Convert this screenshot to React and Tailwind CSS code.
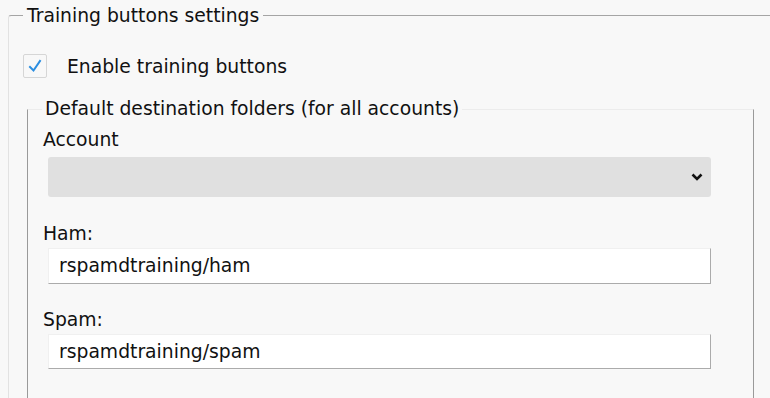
export default function App() {
  const font = { fontFamily: '"DejaVu Sans", sans-serif' };
  return (
    <div className="w-[770px] h-[398px] overflow-hidden bg-[#f8f8f8] text-[#111] text-[18.75px] leading-[22px]" style={font}>
      <fieldset className="ml-[8px] mt-[4px] w-[900px] border-t border-l border-t-[#a5a5a5] border-l-[#e2e2e2] rounded-tl-[3px] min-h-[500px]">
        <legend className="ml-[14px] px-[4px] pt-[1px]">Training buttons settings</legend>
        <div className="flex items-center mt-[27px] ml-[14px]">
          <div className="w-[24px] h-[24px] border border-[#d6d6d6] bg-[#f8f8f8] flex items-center justify-center rounded-[2px]">
            <svg width="16" height="16" viewBox="0 0 16 16">
              <path d="M3 9 L6.5 12.5 L13 3" fill="none" stroke="#2b8ee0" strokeWidth="2" strokeLinecap="square" strokeLinejoin="miter" />
            </svg>
          </div>
          <span className="ml-[20px] pt-[1px]">Enable training buttons</span>
        </div>
        <fieldset className="ml-[18px] mt-[20px] w-[727px] border-t border-l border-r border-t-[#ececec] border-l-[#9a9a9a] border-r-[#9a9a9a] min-h-[400px]">
          <legend className="ml-[14px] px-[3px]">Default destination folders (for all accounts)</legend>
          <div className="ml-[15px] mt-[9px]">Account</div>
          <div className="ml-[20px] mt-[6px] w-[663px] h-[40px] bg-[#e0e0e0] rounded-[3px] flex items-center justify-end pr-[8px]">
            <svg width="12" height="8" viewBox="0 0 12 8">
              <path d="M1.5 1.5 L6 6 L10.5 1.5" fill="none" stroke="#111" strokeWidth="2.6" />
            </svg>
          </div>
          <div className="ml-[15px] mt-[26px]">Ham:</div>
          <div className="ml-[20px] mt-[3px] w-[663px] h-[36px] bg-white border border-t-[#f0f0f0] border-l-[#f0f0f0] border-r-[#ababab] border-b-[#ababab] flex items-center pl-[10px]">rspamdtraining/ham</div>
          <div className="ml-[15px] mt-[25px]">Spam:</div>
          <div className="ml-[20px] mt-[3px] w-[663px] h-[35px] bg-white border border-t-[#f0f0f0] border-l-[#f0f0f0] border-r-[#ababab] border-b-[#ababab] flex items-center pl-[10px]">rspamdtraining/spam</div>
        </fieldset>
      </fieldset>
    </div>
  );
}
